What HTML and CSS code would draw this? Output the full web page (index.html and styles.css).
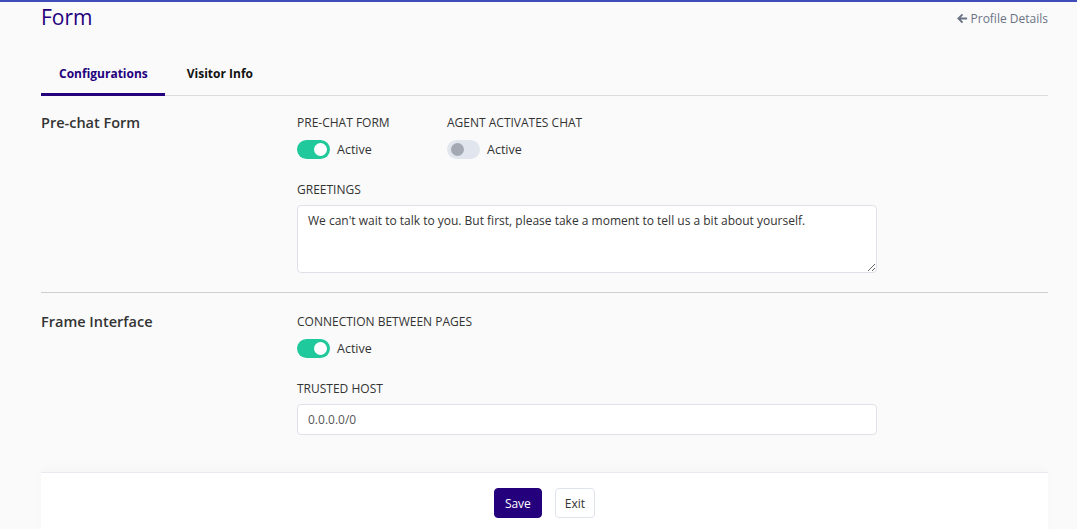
FILE: index.html
```html
<!DOCTYPE html>
<html lang="en">
<head>
  <meta charset="UTF-8">
  <title>Form</title>
  <link rel="stylesheet" href="styles.css">
</head>
<body>
  <div class="page">
    <div class="header">
      <h1>Form</h1>
      <a class="back" href="#">
        <svg width="11" height="11" viewBox="0 0 12 12"><path d="M6 1.5 1.5 6 6 10.5M1.8 6H11" fill="none" stroke="currentColor" stroke-width="2"/></svg>
        Profile Details
      </a>
    </div>

    <div class="tabs">
      <div class="tab active">Configurations</div>
      <div class="tab">Visitor Info</div>
    </div>

    <div class="section">
      <div class="section-title">Pre-chat Form</div>
      <div class="fields">
        <div class="row">
          <div class="field">
            <div class="label">PRE-CHAT FORM</div>
            <label class="switch"><span class="toggle on"></span>Active</label>
          </div>
          <div class="field">
            <div class="label">AGENT ACTIVATES CHAT</div>
            <label class="switch"><span class="toggle"></span>Active</label>
          </div>
        </div>
        <div class="field">
          <div class="label">GREETINGS</div>
          <textarea class="input area">We can't wait to talk to you. But first, please take a moment to tell us a bit about yourself.</textarea>
        </div>
      </div>
    </div>

    <div class="section">
      <div class="section-title">Frame Interface</div>
      <div class="fields">
        <div class="field">
          <div class="label">CONNECTION BETWEEN PAGES</div>
          <label class="switch"><span class="toggle on"></span>Active</label>
        </div>
        <div class="field">
          <div class="label">TRUSTED HOST</div>
          <input class="input" type="text" value="0.0.0.0/0">
        </div>
      </div>
    </div>

    <div class="footer">
      <button class="btn primary">Save</button>
      <button class="btn">Exit</button>
    </div>
  </div>
</body>
</html>
```

FILE: styles.css
```css
body {
  margin: 0;
  background: #fafafa;
  border-top: 2px solid #3f4db8;
  font-family: "Open Sans", "Noto Sans", sans-serif;
  color: #333;
  overflow: hidden;
}
.page {
  padding: 0 29px 0 41px;
}
.header {
  display: flex;
  justify-content: space-between;
  align-items: center;
  height: 32px;
}
.header h1 {
  margin: 0;
  font-size: 21px;
  font-weight: 500;
  color: #24007d;
  margin-top: -2px;
}
.back {
  color: #6b7285;
  text-decoration: none;
  font-size: 12px;
  display: flex;
  align-items: center;
  gap: 3px;
}
.tabs {
  display: flex;
  margin-top: 25px;
  border-bottom: 1px solid #dcdcdc;
}
.tab {
  padding: 6px 17px 11px 18px;
  font-size: 12px;
  font-weight: 700;
  color: #111;
  border-bottom: 3px solid transparent;
  margin-bottom: -1px;
  margin-right: 4px;
}
.tab.active {
  color: #24007d;
  border-bottom-color: #24007d;
}
.section {
  display: grid;
  grid-template-columns: 256px 580px;
  padding: 17px 0 19px;
  border-bottom: 1px solid #cfcfcf;
}
.section + .section {
  border-bottom: none;
  padding-top: 19px;
}
.section-title {
  font-size: 14.5px;
  font-weight: 600;
  color: #333;
}
.fields {
  display: flex;
  flex-direction: column;
  gap: 21px;
}
.row {
  display: flex;
}
.row .field {
  width: 150px;
}
.label {
  font-size: 12px;
  color: #333;
  margin-top: 1px;
  padding-bottom: 7px;
}
.switch {
  display: flex;
  align-items: center;
  gap: 7px;
  padding-top: 2px;
  font-size: 12.5px;
  color: #333;
}
.toggle {
  width: 33px;
  height: 19px;
  border-radius: 10px;
  background: #e1e5ee;
  position: relative;
}
.toggle::after {
  content: "";
  position: absolute;
  top: 3px;
  left: 4px;
  width: 13px;
  height: 13px;
  border-radius: 50%;
  background: #a4a8b3;
}
.toggle.on {
  background: #1fc99b;
}
.toggle.on::after {
  left: auto;
  right: 3px;
  background: #fff;
}
.input {
  display: block;
  box-sizing: border-box;
  width: 580px;
  height: 31px;
  border: 1px solid #dfe1e8;
  border-radius: 4px;
  background: #fff;
  padding: 6px 10px;
  font-family: inherit;
  font-size: 12px;
  color: #555;
}
.area {
  height: 68px;
  resize: vertical;
  color: #333;
}
.footer {
  margin-top: 18px;
  background: #fff;
  border-top: 1px solid #e8eaf0;
  box-shadow: 0 -4px 8px rgba(0, 0, 0, 0.02);
  display: flex;
  justify-content: center;
  gap: 13px;
  padding: 15px 0 20px;
}
.btn {
  font-family: inherit;
  font-size: 12px;
  height: 30px;
  padding: 0 9px;
  border: 1px solid #dfe3ee;
  border-radius: 4px;
  background: #fff;
  color: #333;
}
.btn.primary {
  background: #24007d;
  border-color: #24007d;
  color: #fff;
  padding: 0 10px;
}
```
